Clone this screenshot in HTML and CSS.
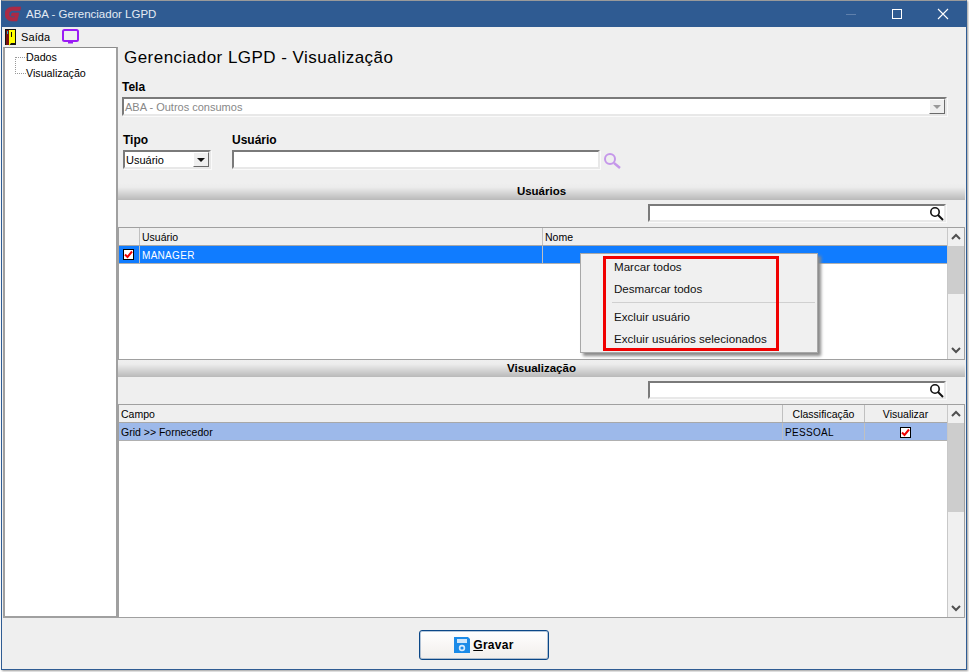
FILE: index.html
```html
<!DOCTYPE html>
<html lang="pt">
<head>
<meta charset="utf-8">
<title>ABA - Gerenciador LGPD</title>
<link rel="stylesheet" href="styles.css">
</head>
<body>
<div class="window">
  <header class="titlebar">
    <svg class="logo" width="16" height="16" viewBox="0 0 16 16"><path d="M16 1H8C3 1 0 4 0 8c0 4 3 7 7 7h5l2-8H7l-1 3h4l-.5 1.500h-2C5.500 11.500 4 10 4 8c0-2 2-3.500 4-3.500h7z" fill="#ab2a45" stroke="#ab2a45" stroke-width=".6"/></svg>
    <span class="title">ABA - Gerenciador LGPD</span>
    <span class="winbtns">
      <svg width="46" height="12" viewBox="0 0 46 12"><path d="M18 6.500h10" stroke="#5f80ac" stroke-width="1"/></svg>
      <svg width="46" height="12" viewBox="0 0 46 12"><rect x="18.500" y="1.500" width="9" height="9" fill="none" stroke="#fff"/></svg>
      <svg width="46" height="12" viewBox="0 0 46 12"><path d="M18 1l10 10M28 1L18 11" stroke="#fff" stroke-width="1.100" fill="none"/></svg>
    </span>
  </header>
  <nav class="menubar">
    <svg class="door" width="12" height="17" viewBox="0 0 12 17"><rect width="11" height="16" fill="#111"/><rect x="1" y="1" width="3" height="15" fill="#7a1010"/><path d="M4 1h6v13H6l-2 3z" fill="#ffff00"/><rect x="2" y="2" width="1" height="3" fill="#2aa7c9"/><rect x="6" y="3" width="1" height="5" fill="#111"/></svg>
    <span class="menu-text">Saída</span>
    <svg class="monitor" width="17" height="15" viewBox="0 0 17 15"><rect x="1" y="1" width="15" height="11" rx="1.500" fill="none" stroke="#9b1cf5" stroke-width="2"/><rect x="6" y="13" width="5" height="1.500" fill="#9b1cf5"/></svg>
  </nav>
  <div class="workspace">
    <aside class="tree">
      <div class="tree-lines"></div>
      <div class="tree-item">Dados</div>
      <div class="tree-item">Visualização</div>
    </aside>
    <main class="content">
      <h1 class="heading">Gerenciador LGPD - Visualização</h1>
      <div class="field tela">
        <label class="label">Tela</label>
        <div class="sunken wide disabled"><span>ABA - Outros consumos</span><span class="dropbtn off"><i></i></span></div>
      </div>
      <div class="filters">
        <div class="field">
          <label class="label">Tipo</label>
          <div class="sunken tipo"><span>Usuário</span><span class="dropbtn"><i></i></span></div>
        </div>
        <div class="field">
          <label class="label">Usuário</label>
          <div class="sunken user"></div>
        </div>
        <svg class="lookup" width="19" height="17" viewBox="0 0 19 17"><circle cx="7" cy="7" r="5" fill="none" stroke="#c597ea" stroke-width="2"/><path d="M11 11l6 5" stroke="#c597ea" stroke-width="2.400"/></svg>
      </div>
      <div class="section first">Usuários</div>
      <div class="searchrow">
        <div class="sunken search"><svg width="15" height="15" viewBox="0 0 15 15"><circle cx="6" cy="6" r="4.200" fill="none" stroke="#111" stroke-width="1.600"/><path d="M9 9l5 5" stroke="#111" stroke-width="2"/></svg></div>
      </div>
      <div class="grid users">
        <div class="table">
          <div class="row head">
            <div class="cell c-check"></div><div class="cell c-user">Usuário</div><div class="cell c-name">Nome</div>
          </div>
          <div class="row selected">
            <div class="cell c-check"><span class="check"><svg width="9" height="9" viewBox="0 0 9 9"><path d="M1 4.500l2.500 2.500L8 1.500" fill="none" stroke="#f00000" stroke-width="2"/></svg></span></div>
            <div class="cell c-user caps">MANAGER</div><div class="cell c-name"></div>
          </div>
        </div>
        <div class="scrollbar">
          <svg class="arrow" width="16" height="18" viewBox="0 0 16 18"><path d="M4 11l4-4 4 4" fill="none" stroke="#505050" stroke-width="2"/></svg>
          <div class="track"><div class="thumb short"></div></div>
          <svg class="arrow" width="16" height="18" viewBox="0 0 16 18"><path d="M4 7l4 4 4-4" fill="none" stroke="#505050" stroke-width="2"/></svg>
        </div>
      </div>
      <div class="section">Visualização</div>
      <div class="searchrow two">
        <div class="sunken search"><svg width="15" height="15" viewBox="0 0 15 15"><circle cx="6" cy="6" r="4.200" fill="none" stroke="#111" stroke-width="1.600"/><path d="M9 9l5 5" stroke="#111" stroke-width="2"/></svg></div>
      </div>
      <div class="grid fields">
        <div class="table">
          <div class="row head">
            <div class="cell c-campo">Campo</div><div class="cell c-class center">Classificação</div><div class="cell c-view center">Visualizar</div>
          </div>
          <div class="row light">
            <div class="cell c-campo">Grid &gt;&gt; Fornecedor</div><div class="cell c-class caps">PESSOAL</div>
            <div class="cell c-view center"><span class="check"><svg width="9" height="9" viewBox="0 0 9 9"><path d="M1 4.500l2.500 2.500L8 1.500" fill="none" stroke="#f00000" stroke-width="2"/></svg></span></div>
          </div>
        </div>
        <div class="scrollbar">
          <svg class="arrow" width="16" height="18" viewBox="0 0 16 18"><path d="M4 11l4-4 4 4" fill="none" stroke="#505050" stroke-width="2"/></svg>
          <div class="track"><div class="thumb long"></div></div>
          <svg class="arrow" width="16" height="18" viewBox="0 0 16 18"><path d="M4 7l4 4 4-4" fill="none" stroke="#505050" stroke-width="2"/></svg>
        </div>
      </div>
    </main>
  </div>
  <footer class="footer">
    <button class="save" type="button">
      <svg width="16" height="16" viewBox="0 0 16 16"><path d="M0 0h14l2 2v14H0z" fill="#1b8be8"/><rect x="3" y="2" width="10" height="4" fill="#cfe6fa"/><circle cx="8" cy="11" r="2.400" fill="none" stroke="#d6eafc" stroke-width="1.600"/></svg>
      <span><u>G</u>ravar</span>
    </button>
  </footer>
  <div class="ctxmenu">
    <div class="ctxitem">Marcar todos</div>
    <div class="ctxitem">Desmarcar todos</div>
    <div class="ctxsep"></div>
    <div class="ctxitem">Excluir usuário</div>
    <div class="ctxitem">Excluir usuários selecionados</div>
  </div>
  <div class="callout"></div>
</div>
</body>
</html>
```
FILE: styles.css
```css
* { box-sizing: border-box; }
html, body { margin: 0; padding: 0; }
body {
  width: 969px; height: 672px; overflow: hidden; background: #fff;
  font-family: "Liberation Sans", Arial, sans-serif; font-size: 12px; color: #000;
}
.window {
  position: relative; margin-left: 1px; width: 966px; height: 670px;
  background: #efefef; border: 1px solid #2f5c93; border-top-color: #9a9a9a;
  box-shadow: 1px 1px 2px #999;
  display: flex; flex-direction: column;
}
.titlebar { height: 26px; flex: none; background: #2f5b92; color: #fff; display: flex; align-items: center; padding-left: 3px; }
.logo { flex: none; }
.title { margin-left: 5px; font-size: 11.5px; color: #e4ebf4; }
.winbtns { margin-left: auto; display: flex; }
.menubar { height: 20px; flex: none; display: flex; align-items: center; padding-left: 3px; }
.door { flex: none; }
.menu-text { margin-left: 4px; font-size: 11px; letter-spacing: .1px; }
.monitor { margin: -2px 0 0 12px; }
.workspace { flex: none; height: 571px; display: flex; padding-left: 1px; }
.tree { position: relative; width: 115px; flex: none; background: #fff; border: 2px solid #a0a0a0; border-top-width: 1px; border-top-color: #8c8c8c; padding: 2px 0 0 21px; }
.tree-lines { position: absolute; left: 10px; top: 9px; width: 11px; height: 17px; border-left: 1px dotted #999; border-bottom: 1px dotted #999; }
.tree-lines::before { content: ""; position: absolute; left: 0; top: 0; width: 11px; border-top: 1px dotted #999; }
.tree-item { height: 16px; line-height: 15px; font-size: 10.7px; }
.content { flex: none; width: 847px; display: flex; flex-direction: column; }
.heading { margin: 1px 0 0 6px; font-weight: 400; font-size: 17px; line-height: 20px; height: 20px; letter-spacing: .47px; }
.field { display: flex; flex-direction: column; }
.tela { margin: 12px 0 0 4px; }
.label { font-weight: 700; font-size: 12px; line-height: 14px; height: 17px; }
.sunken {
  background: #fff; border: 2px solid; border-color: #7a7a7a #e8e8e8 #e8e8e8 #7a7a7a; height: 19px;
  display: flex; align-items: center; font-size: 11px; box-shadow: 1px 1px 0 #fafafa;
}
.wide { width: 825px; padding-left: 1px; color: #888; justify-content: space-between; }
.dropbtn { width: 16px; height: 15px; background: #efefef; border: 1px solid; border-color: #fff #6a6a6a #6a6a6a #fff; display: flex; align-items: center; justify-content: center; }
.dropbtn i { width: 0; height: 0; border: 4px solid transparent; border-top: 4px solid #111; border-bottom: 0; }
.dropbtn.off i { border-top-color: #999; }
.filters { display: flex; align-items: flex-end; margin: 17px 0 0 5px; }
.tipo { width: 88px; padding-left: 1px; justify-content: space-between; }
.filters > .field + .field { margin-left: 21px; }
.user { width: 368px; }
.lookup { margin: 0 0 0 3px; }
.section { height: 17px; flex: none; background: linear-gradient(#efefef 0, #ececec 25%, #b9b9b9 100%); text-align: center; font-weight: 700; line-height: 16px; margin-top: 14px; font-size: 11.5px; }
.section:not(.first) { margin-top: 0; }
.searchrow { height: 27px; padding: 4px 0 0 530px; flex: none; }
.search { width: 298px; height: 18px; justify-content: flex-end; }
.grid { display: flex; border: 1px solid #a0a0a0; background: #fff; flex: none; }
.users { height: 133px; }
.fields { height: 214px; }
.table { width: 828px; flex: none; }
.row { display: flex; height: 18px; border-bottom: 1px solid #b0b0b0; font-size: 10.5px; line-height: 19px; }
.head { background: #efefef; border-bottom: 1px solid #a8a8a8; }
.selected { background: #107cff; color: #fff; }
.light { background: #9db9ea; }
.cell { border-right: 1px solid #c0c0c0; padding-left: 2px; white-space: nowrap; }
.cell:last-child { border-right: 0; }
.caps { font-size: 10px; letter-spacing: .3px; }
.c-check { width: 21px; padding-left: 4px; display: flex; align-items: center; }
.c-user { width: 403px; }
.c-name { flex: 1; }
.c-campo { width: 664px; }
.c-class { width: 82px; }
.c-view { flex: 1; }
.center { text-align: center; padding-left: 0; }
.c-view.center { padding-right: 1px; }
.check { display: inline-flex; width: 11px; height: 11px; background: #fff; border: 1px solid #000; vertical-align: -1px; align-items: center; justify-content: center; }
.scrollbar { width: 17px; flex: none; background: #f0f0f0; border-left: 1px solid #c8c8c8; display: flex; flex-direction: column; }
.arrow { flex: none; display: block; }
.track { flex: 1; min-height: 0; }
.thumb { background: #cdcdcd; }
.thumb.short { height: 48px; }
.thumb.long { height: 89px; }
.footer { flex: 1; display: flex; justify-content: center; align-items: flex-start; padding-top: 12px; }
.save {
  width: 130px; height: 30px; border: 1px solid #0a4787; border-radius: 3px; padding: 0;
  box-shadow: inset 0 0 0 1px rgba(10,71,135,.3);
  background: linear-gradient(#fff, #f1eeeb); display: flex; align-items: center; justify-content: center; gap: 3px;
  font: 700 12px "Liberation Sans", Arial, sans-serif; letter-spacing: .3px; color: #000;
}
.ctxmenu {
  position: absolute; left: 578px; top: 252px; width: 238px; height: 100px;
  background: #f0f0f0; border: 1px solid #a8a8a8; box-shadow: 3px 3px 3px #8a8a8a; padding: 2px 0 0 33px; font-size: 11.6px;
}
.ctxitem { height: 22px; line-height: 22px; white-space: nowrap; color: #111; }
.ctxsep { height: 1px; background: #d0d0d0; margin: 2px 2px 3px -2px; }
.callout { position: absolute; left: 601px; top: 255px; width: 176px; height: 95px; border: 3px solid #f00000; }
```
